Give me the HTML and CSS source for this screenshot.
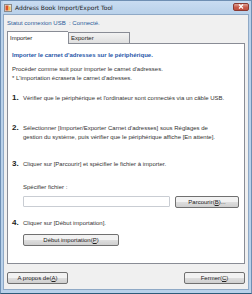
FILE: index.html
```html
<!DOCTYPE html>
<html lang="fr">
<head>
  <meta charset="UTF-8" />
  <title>Address Book Import/Export Tool</title>
  <link rel="stylesheet" href="styles.css">
</head>
<body>

  <!-- Window frame -->
  <div class="window">
    <div class="titlebar">
      <svg class="app-icon" width="8" height="8" viewBox="0 0 8 8">
        <rect x="0.5" y="0.5" width="7" height="7" fill="#e8e4d8" stroke="#8a8a8a" />
        <rect x="1.5" y="1.5" width="3" height="5" fill="#d9532b" />
        <rect x="4.5" y="2.5" width="2" height="4" fill="#f2c14e" />
      </svg>
      <span class="title">Address Book Import/Export Tool</span>
      <span class="close-btn">
        <svg width="6" height="5" viewBox="0 0 6 5">
          <path d="M1 0.5 L5 4.5 M5 0.5 L1 4.5" stroke="#fff" stroke-width="1.2" />
        </svg>
      </span>
    </div>

    <div class="client">
      <p class="status">Statut connexion USB&nbsp; : Connecté.</p>

      <!-- Tabs -->
      <div class="tabs">
        <span class="tab tab-active">Importer</span>
        <span class="tab">Exporter</span>
      </div>

      <section class="panel">
        <h2 class="panel-heading">Importer le carnet d'adresses sur le périphérique.</h2>
        <p class="intro">
          Procéder comme suit pour importer le carnet d'adresses.<br>
          * L'importation écrasera le carnet d'adresses.
        </p>

        <ol class="steps">
          <li class="step">
            <span class="step-num">1.</span>
            <span class="step-text">Vérifier que le périphérique et l'ordinateur sont connectés via un câble USB.</span>
          </li>
          <li class="step step-2">
            <span class="step-num">2.</span>
            <span class="step-text">Sélectionner [Importer/Exporter Carnet d'adresses] sous Réglages de<br>gestion du système, puis vérifier que le périphérique affiche [En attente].</span>
          </li>
          <li class="step step-3">
            <span class="step-num">3.</span>
            <span class="step-text">Cliquer sur [Parcourir] et spécifier le fichier à importer.</span>
          </li>
        </ol>

        <div class="file-field">
          <label for="file" class="file-label">Spécifier fichier :</label>
          <div class="file-row">
            <input type="text" id="file" class="file-input" />
            <button type="button" class="btn btn-browse">Parcourir(<u>B</u>)...</button>
          </div>
        </div>

        <ol class="steps">
          <li class="step step-4">
            <span class="step-num">4.</span>
            <span class="step-text">Cliquer sur [Début importation].</span>
          </li>
        </ol>
        <button type="button" class="btn btn-start">Début importation(<u>P</u>)</button>
      </section>

      <div class="actions">
        <button type="button" class="btn btn-footer">A propos de(<u>A</u>)</button>
        <button type="button" class="btn btn-footer">Fermer(<u>C</u>)</button>
      </div>
    </div>
  </div>

</body>
</html>
```

FILE: styles.css
```css
/* Base */
body {
  margin: 0;
  font-family: 'Liberation Sans', Arial, sans-serif;
  font-size: 6px;
  color: #333;
}

p, h2, ol {
  margin: 0;
  padding: 0;
}

/* Window frame */
.window {
  width: 252px;
  height: 294px;
  box-sizing: border-box;
  background: #b9d1ea;
  border: 1px solid #6f8fb3;
  border-bottom-color: #2e5b7a;
  padding: 0 2px 3px 2px;
  display: flex;
  flex-direction: column;
}

.titlebar {
  height: 13px;
  display: flex;
  align-items: center;
  gap: 3px;
  padding-left: 1px;
  background: linear-gradient(#c9dcf1, #b9d1ea);
}

.title {
  flex: 1;
  font-family: 'DejaVu Sans', sans-serif;
  font-size: 6px;
  color: #1e1e1e;
}

.close-btn {
  width: 16px;
  height: 8px;
  margin-top: -2px;
  border: 1px solid #8a3a32;
  border-radius: 2px;
  background: linear-gradient(#e0a195, #c75a4a 55%, #c05040);
  display: flex;
  align-items: center;
  justify-content: center;
  box-sizing: border-box;
}

/* Client area */
.client {
  flex: 1;
  background: #f0f0f0;
  border: 1px solid #8fa9c6;
  padding: 0 3px;
  display: flex;
  flex-direction: column;
}

.status {
  color: #2a5c9a;
  line-height: 10px;
  margin-top: 3px;
}

/* Tabs */
.tabs {
  display: flex;
  align-items: flex-end;
  margin-top: 3px;
  height: 12px;
  position: relative;
  z-index: 1;
}

.tab {
  height: 10px;
  line-height: 10px;
  width: 58px;
  padding-left: 2px;
  border: 1px solid #898c95;
  border-bottom: none;
  background: linear-gradient(#f2f2f2, #e0e0e0);
  color: #222;
}

.tab-active {
  height: 12px;
  line-height: 12px;
  background: #fff;
  margin-bottom: -1px;
  border-right: none;
}

/* Tab panel */
.panel {
  background: #fff;
  border: 1px solid #898c95;
  height: 221px;
  box-sizing: border-box;
  padding: 7px 4px 0 4px;
}

.panel-heading {
  font-size: 6px;
  font-weight: bold;
  color: #1f56a8;
  line-height: 9px;
}

.intro {
  margin-top: 5px;
  line-height: 9px;
}

.steps {
  list-style: none;
  margin-top: 10px;
}

.step {
  display: flex;
  align-items: baseline;
  line-height: 9px;
}

.step-2 {
  margin-top: 20px;
}

.step-3 {
  margin-top: 17px;
}

.step-num {
  width: 11px;
  font-size: 8px;
  font-weight: bold;
  color: #222;
}

/* File field */
.file-field {
  margin: 14px 0 0 11px;
}

.file-label {
  display: block;
  line-height: 9px;
}

.file-row {
  display: flex;
  gap: 5px;
  margin-top: 4px;
}

.file-input {
  width: 147px;
  height: 11px;
  box-sizing: border-box;
  border: 1px solid #c9cdd3;
  border-radius: 1px;
  padding: 0;
}

.step-4 {
  margin-top: 0;
}

/* Buttons */
.btn {
  font-family: 'Liberation Sans', Arial, sans-serif;
  font-size: 6px;
  color: #222;
  height: 12px;
  padding: 0;
  box-sizing: border-box;
  border: 1px solid #707070;
  border-radius: 2px;
  background: linear-gradient(#f2f2f2 45%, #dddddd 55%, #cfcfcf);
  cursor: pointer;
}

.btn-browse {
  width: 64px;
}

.btn-start {
  width: 96px;
  margin: 6px 0 0 11px;
  display: block;
}

/* Footer */
.actions {
  display: flex;
  justify-content: space-between;
  margin-top: 8px;
}

.btn-footer {
  width: 61px;
}
```
